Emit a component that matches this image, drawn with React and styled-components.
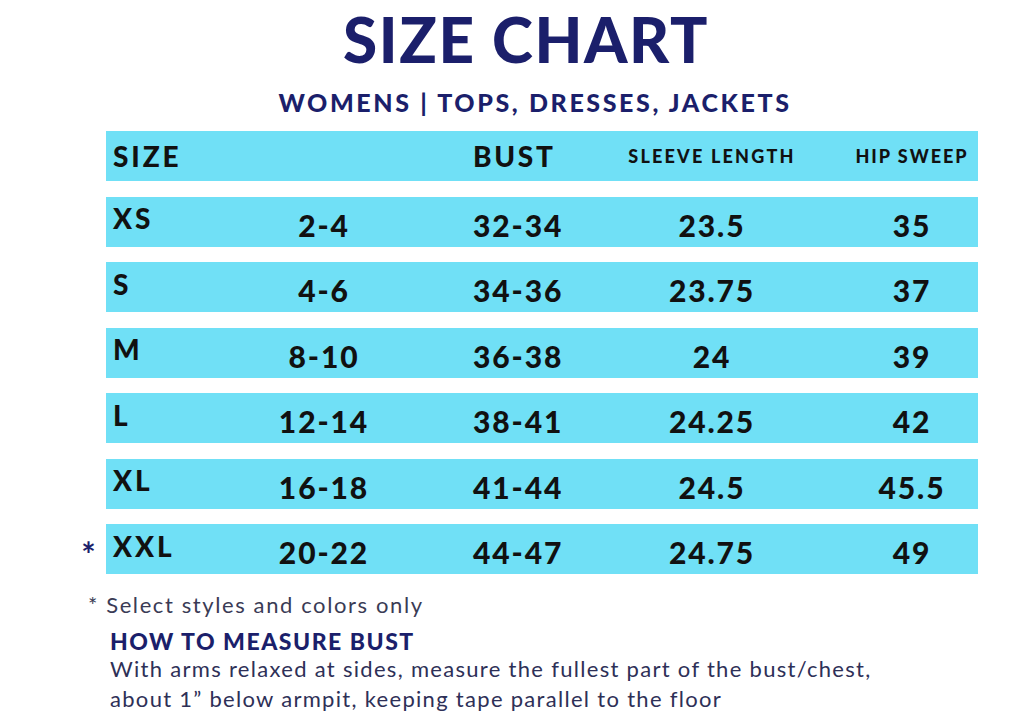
import React from "react";
import styled, { createGlobalStyle } from "styled-components";

const GlobalStyle = createGlobalStyle`
  html, body {
    margin: 0;
    padding: 0;
    background: #ffffff;
  }
  body {
    font-family: "Lato", "Open Sans", sans-serif;
    overflow: hidden;
  }
`;

const Page = styled.div`
  width: 1021px;
  height: 712px;
  overflow: hidden;
  background: #fff;
`;

const Title = styled.h1`
  margin: 0;
  padding: 2px 0 0 ${(p) => p.shift}px;
  text-align: center;
  font-size: 62px;
  line-height: 74px;
  font-weight: 900;
  color: #1b1f6b;
  letter-spacing: 1.6px;
`;

const Subtitle = styled.h2`
  margin: 0;
  padding: 11px 0 0 ${(p) => p.shift}px;
  text-align: center;
  font-size: 25px;
  line-height: 30px;
  font-weight: 900;
  color: #1b1f6b;
  letter-spacing: 2.6px;
`;

const Table = styled.div`
  margin: 14px 0 0 75px;
  display: flex;
  flex-direction: column;
  gap: 15.5px;
`;

const Row = styled.div`
  display: flex;
  align-items: center;
`;

const Marker = styled.div`
  width: 31px;
  text-align: center;
  padding-right: 4px;
  box-sizing: border-box;
  font-size: 34px;
  font-weight: 700;
  color: #1b1f6b;
  line-height: 30px;
  padding-top: 10px;
`;

const Band = styled.div`
  width: 872px;
  height: 50px;
  background: #70e0f6;
  display: grid;
  grid-template-columns: 150px 136px 186px 268px 132px;
  align-items: center;
  color: #111;
  font-weight: 900;
`;

const Cell = styled.div`
  font-size: ${(p) => p.size || 30}px;
  letter-spacing: ${(p) => p.track ?? 1.9}px;
  line-height: 1;
  text-align: ${(p) => (p.left ? "left" : "center")};
  padding-left: ${(p) => p.pad || 0}px;
  padding-top: ${(p) => p.down || 0}px;
  padding-bottom: ${(p) => p.up || 0}px;
  white-space: nowrap;
`;

const Note = styled.p`
  margin: 17px 0 0 88px;
  font-size: 22px;
  line-height: 28px;
  color: #3a3b55;
  letter-spacing: 1.6px;
`;

const HowTitle = styled.h3`
  margin: 8px 0 0 110px;
  font-size: 23px;
  line-height: 28px;
  font-weight: 900;
  color: #1b1f6b;
  letter-spacing: 1.5px;
`;

const HowText = styled.p`
  margin: -1px 0 0 110px;
  font-size: 22px;
  line-height: 30px;
  color: #2e3057;
  letter-spacing: 1.3px;
`;

const rows = [
  ["XS", "2-4", "32-34", "23.5", "35"],
  ["S", "4-6", "34-36", "23.75", "37"],
  ["M", "8-10", "36-38", "24", "39"],
  ["L", "12-14", "38-41", "24.25", "42"],
  ["XL", "16-18", "41-44", "24.5", "45.5"],
  ["XXL", "20-22", "44-47", "24.75", "49", true],
];

export default function App() {
  return (
    <Page>
      <GlobalStyle />
      <Title shift={31}>SIZE CHART</Title>
      <Subtitle shift={49}>WOMENS | TOPS, DRESSES, JACKETS</Subtitle>

      <Table>
        <Row>
          <Marker />
          <Band>
            <Cell left pad={7} size={28} track={2.9}>SIZE</Cell>
            <Cell />
            <Cell left pad={81} size={28} track={2.7}>BUST</Cell>
            <Cell size={18} track={2.2}>SLEEVE LENGTH</Cell>
            <Cell size={18} track={2}>HIP SWEEP</Cell>
          </Band>
        </Row>
        {rows.map(([size, us, bust, sleeve, hip, marked]) => (
          <Row key={size}>
            <Marker>{marked ? "*" : ""}</Marker>
            <Band>
              <Cell left pad={7} size={28} track={3} up={7}>{size}</Cell>
              <Cell down={6}>{us}</Cell>
              <Cell left pad={81} down={6}>{bust}</Cell>
              <Cell down={6}>{sleeve}</Cell>
              <Cell down={6}>{hip}</Cell>
            </Band>
          </Row>
        ))}
      </Table>

      <Note>* Select styles and colors only</Note>
      <HowTitle>HOW TO MEASURE BUST</HowTitle>
      <HowText>
        With arms relaxed at sides, measure the fullest part of the bust/chest,
        <br />
        about 1” below armpit, keeping tape parallel to the floor
      </HowText>
    </Page>
  );
}
